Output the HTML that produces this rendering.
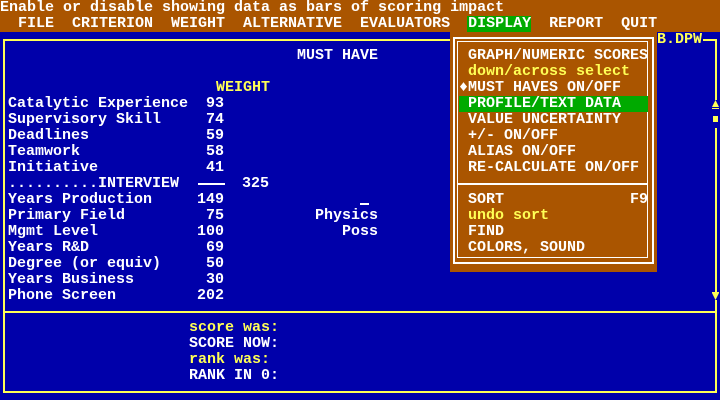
<!DOCTYPE html>
<html><head><style>
*{margin:0;padding:0}
body{width:720px;height:400px;background:#0000aa;position:relative;overflow:hidden;font-family:"Liberation Mono",monospace;font-size:15px;font-weight:bold;color:#fff}
.t{position:absolute;white-space:pre;line-height:16px;height:16px}
.y{color:#ffff55}
.b{position:absolute}
</style></head><body>
<div class="b" style="left:0;top:0;width:720px;height:32px;background:#aa5500"></div>
<div class="t" style="left:0;top:0">Enable or disable showing data as bars of scoring impact</div>
<div class="b" style="left:467px;top:16px;width:64px;height:16px;background:#00aa00"></div>
<div class="t" style="left:0;top:16px">  FILE  CRITERION  WEIGHT  ALTERNATIVE  EVALUATORS  DISPLAY  REPORT  QUIT</div>

<div class="b" style="left:3px;top:39px;width:710px;height:350px;border:2px solid #ffff55"></div>
<div class="b" style="left:3px;top:311px;width:714px;height:2px;background:#ffff55"></div>

<div class="t" style="left:297px;top:48px">MUST HAVE</div>
<div class="t y" style="left:216px;top:80px">WEIGHT</div>
<div class="t" style="left:8px;top:96px">Catalytic Experience  93
Supervisory Skill     74
Deadlines             59
Teamwork              58
Initiative            41
..........INTERVIEW       325
Years Production     149
Primary Field         75
Mgmt Level           100
Years R&amp;D             69
Degree (or equiv)     50
Years Business        30
Phone Screen         202</div>
<div class="b" style="left:198px;top:183px;width:27px;height:2px;background:#fff"></div>
<div class="b" style="left:360px;top:203px;width:9px;height:2px;background:#fff"></div>
<div class="t" style="left:315px;top:208px">Physics</div>
<div class="t" style="left:342px;top:224px">Poss</div>

<div class="t y" style="left:189px;top:320px">score was:</div>
<div class="t" style="left:189px;top:336px">SCORE NOW:</div>
<div class="t y" style="left:189px;top:352px">rank was:</div>
<div class="t" style="left:189px;top:368px">RANK IN 0:</div>

<div class="b" style="left:650px;top:32px;width:70px;height:16px;background:#0000aa"></div>
<div class="t y" style="left:657px;top:32px">B.DPW</div>
<div class="b" style="left:703px;top:39px;width:14px;height:2px;background:#ffff55"></div>
<div class="b" style="left:715px;top:39px;width:2px;height:60px;background:#ffff55"></div>
<div class="b" style="left:711px;top:96px;width:9px;height:32px;background:#0000aa"></div>
<div class="b" style="left:711px;top:288px;width:9px;height:16px;background:#0000aa"></div>
<svg class="b" style="left:711px;top:96px" width="9" height="32"><rect x="4" y="0" width="2" height="4" fill="#ffff55"/><polygon points="4.5,4 8,11 1,11" fill="#ffff55"/><rect x="1" y="12" width="7" height="1" fill="#ffff55"/><rect x="2" y="20" width="5" height="6" fill="#ffff55"/></svg>
<svg class="b" style="left:711px;top:288px" width="9" height="16"><rect x="4" y="0" width="2" height="4" fill="#ffff55"/><rect x="1" y="4" width="7" height="1" fill="#ffff55"/><polygon points="1,5 8,5 4.5,12" fill="#ffff55"/><rect x="4" y="12" width="2" height="4" fill="#ffff55"/></svg>

<div class="b" style="left:450px;top:32px;width:207px;height:240px;background:#aa5500"></div>
<div class="b" style="left:453px;top:37px;width:197px;height:223px;border:2px solid #fff"></div>
<div class="b" style="left:457px;top:41px;width:189px;height:215px;border:1px solid #fff"></div>
<div class="b" style="left:457px;top:183px;width:191px;height:2px;background:#fff"></div>
<div class="b" style="left:459px;top:96px;width:189px;height:16px;background:#00aa00"></div>
<div class="t" style="left:459px;top:48px"> GRAPH/NUMERIC SCORES
<span class="y"> down/across select</span>
&#9830;MUST HAVES ON/OFF
 PROFILE/TEXT DATA
 VALUE UNCERTAINTY
 +/- ON/OFF
 ALIAS ON/OFF
 RE-CALCULATE ON/OFF

 SORT              F9
<span class="y"> undo sort</span>
 FIND
 COLORS, SOUND</div>
</body></html>
